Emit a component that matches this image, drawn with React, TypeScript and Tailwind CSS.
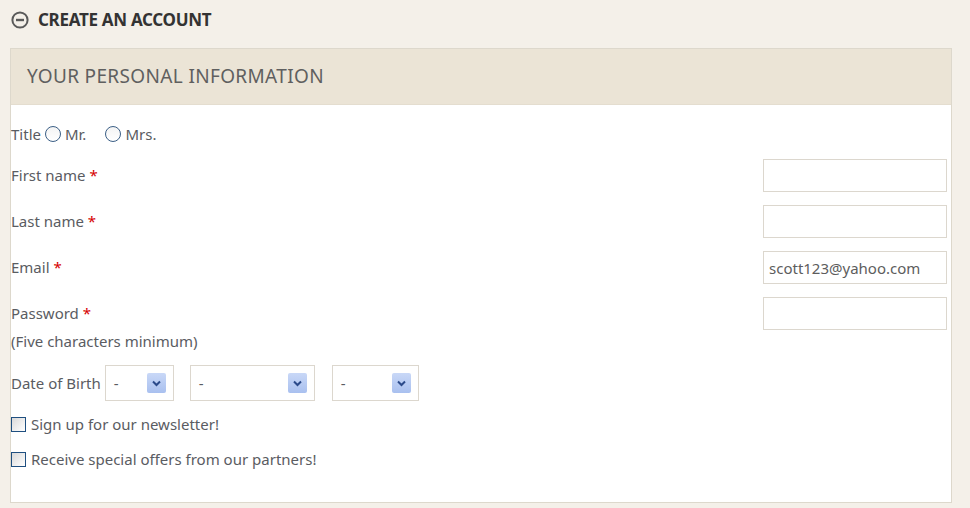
import React from "react";

const font = { fontFamily: '"Noto Sans", "Open Sans", sans-serif' };

function Radio({ label }: { label: string }) {
  return (
    <label className="flex items-center gap-[4px]">
      <span className="w-[16px] h-[16px] rounded-full border border-[#3b5f86] bg-gradient-to-b from-[#f4f4f4] to-white" />
      <span>{label}</span>
    </label>
  );
}

function Checkbox({ label }: { label: string }) {
  return (
    <label className="flex items-center gap-[5px] h-[22px]">
      <span className="w-[15px] h-[15px] border border-[#1f4f80] bg-gradient-to-br from-[#d9d9d9] to-white" />
      <span>{label}</span>
    </label>
  );
}

function TextInput({ value = "" }: { value?: string }) {
  return (
    <input
      readOnly
      value={value}
      className="w-[184px] h-[33px] border border-[#dcd7ce] bg-white px-[5px] text-[15px] text-[#5d5d5d] outline-none"
      style={font}
    />
  );
}

function Select({ width }: { width: string }) {
  return (
    <div className={`${width} h-[36px] border border-[#dcd7ce] bg-white flex items-center justify-between pl-[8px] pr-[7px]`}>
      <span className="text-[15px]">-</span>
      <span className="w-[19px] h-[20px] rounded-[2px] bg-gradient-to-b from-[#c9d8f7] to-[#a9c0ef] flex items-center justify-center">
        <svg width="9" height="7" viewBox="0 0 9 7">
          <path d="M1 1.5 L4.5 5 L8 1.5" stroke="#2b4a8a" strokeWidth="2" fill="none" />
        </svg>
      </span>
    </div>
  );
}

function Req() {
  return <span className="text-[#d60000]"> *</span>;
}

export default function App() {
  return (
    <div className="w-[970px] h-[508px] bg-[#f4f0e9] text-[#5a5c62] text-[15px]" style={font}>
      {/* Section heading */}
      <div className="h-[48px] flex items-center pl-[11px] gap-[9px] pb-[8px]">
        <svg width="18" height="18" viewBox="0 0 18 18">
          <circle cx="9" cy="9" r="7.6" stroke="#5a5a5a" strokeWidth="2" fill="none" />
          <line x1="5" y1="9" x2="13" y2="9" stroke="#5a5a5a" strokeWidth="2.4" />
        </svg>
        <span className="font-bold text-[17px] text-[#333] tracking-[-0.3px]">CREATE AN ACCOUNT</span>
      </div>

      {/* Panel */}
      <div className="ml-[10px] w-[942px] h-[455px] border border-[#ddd8cc] bg-white">
        <div className="h-[56px] bg-[#ebe4d6] border-b border-[#e4ddcf] flex items-center pl-[16px]">
          <span className="text-[19px] text-[#5f5f5f] tracking-[0.35px]">YOUR PERSONAL INFORMATION</span>
        </div>

        <div className="pl-0 pr-[4px] pt-[17px]">
          <div className="h-[24px] flex items-center gap-[4px]">
            <span>Title</span>
            <div className="flex items-center gap-[19px]">
              <Radio label="Mr." />
              <Radio label="Mrs." />
            </div>
          </div>

          <div className="mt-[13px] h-[33px] flex items-center justify-between">
            <span>First name<Req /></span>
            <TextInput />
          </div>
          <div className="mt-[13px] h-[33px] flex items-center justify-between">
            <span>Last name<Req /></span>
            <TextInput />
          </div>
          <div className="mt-[13px] h-[33px] flex items-center justify-between">
            <span>Email<Req /></span>
            <TextInput value="scott123@yahoo.com" />
          </div>
          <div className="mt-[13px] flex items-start justify-between">
            <div>
              <div className="h-[33px] flex items-center">
                <span>Password<Req /></span>
              </div>
              <div className="h-[22px] flex items-center">(Five characters minimum)</div>
            </div>
            <TextInput />
          </div>

          <div className="mt-[13px] h-[36px] flex items-center">
            <span className="mr-[4px]">Date of Birth</span>
            <Select width="w-[69px]" />
            <div className="w-[16px]" />
            <Select width="w-[125px]" />
            <div className="w-[17px]" />
            <Select width="w-[87px]" />
          </div>

          <div className="mt-[12px]">
            <Checkbox label="Sign up for our newsletter!" />
          </div>
          <div className="mt-[13px]">
            <Checkbox label="Receive special offers from our partners!" />
          </div>
        </div>
      </div>
    </div>
  );
}
